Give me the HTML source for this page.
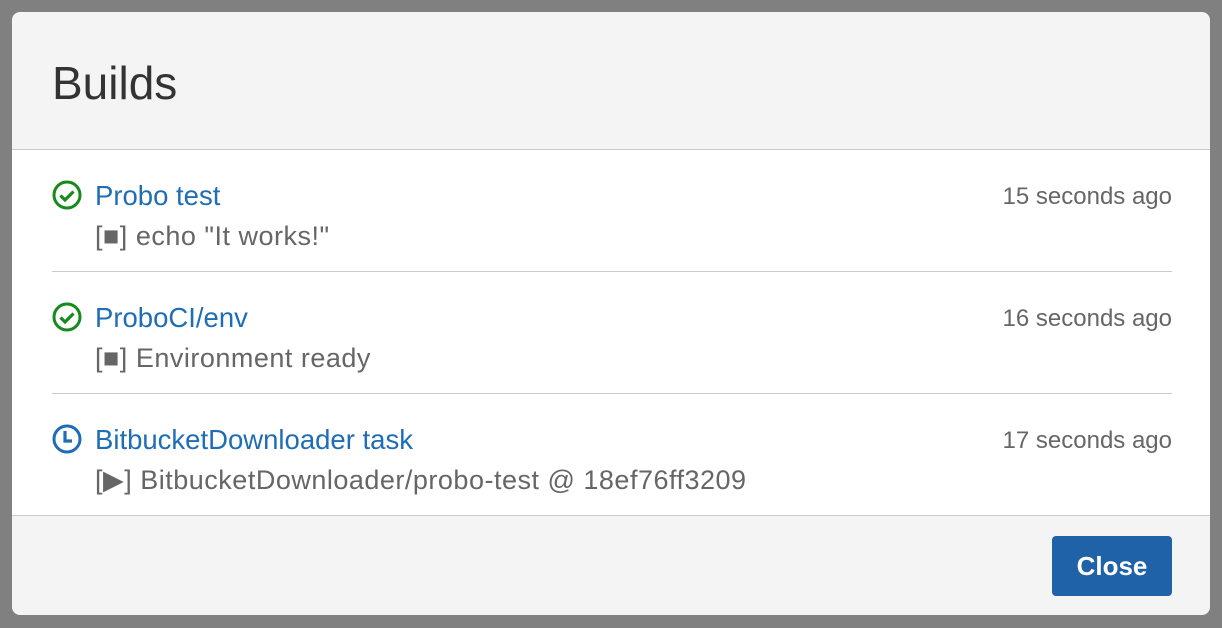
<!DOCTYPE html><html><head><style>
body{margin:0;width:1222px;height:628px;background:#808080;font-family:"Liberation Sans",Arial,Helvetica,sans-serif;position:relative;overflow:hidden}
.d{position:absolute;left:12px;top:12px;width:1198px;height:603px;background:#f4f4f4;border-radius:8px;overflow:hidden}
.h{position:absolute;left:40px;top:44px;font-size:46px;color:#333}
.b{position:absolute;left:0;top:137px;width:1198px;height:365px;background:#fff;border-top:1px solid #ccc;border-bottom:1px solid #ccc}
.r{position:absolute;left:40px;width:1120px;height:121px}
.r.s{border-bottom:1px solid #ccc}
.t{position:absolute;left:43px;top:30px;font-size:27.5px;color:#1f6db5}
.ic{position:absolute;left:0;top:30px}
.tm{position:absolute;right:0;top:33px;font-size:24px;color:#666}
.ds{position:absolute;left:43px;top:71px;font-size:27px;letter-spacing:0.5px;color:#666}
.btn{position:absolute;left:1040px;top:524px;width:120px;height:60px;background:#1f62a8;border-radius:4px;color:#fff;font-weight:bold;font-size:26px;text-align:center;line-height:60px}
</style></head><body><div class="d">
<div class="h">Builds</div>
<div class="b">
<div class="r s" style="top:0">
<svg class="ic" width="30" height="30" viewBox="0 0 30 30"><circle cx="15" cy="15" r="13" fill="none" stroke="#178a1c" stroke-width="3"/><path d="M8.5 15.5l4.5 4.5 8.5-8.5" fill="none" stroke="#178a1c" stroke-width="3.2"/></svg>
<div class="t">Probo test</div><div class="tm">15 seconds ago</div><div class="ds">[■] echo "It works!"</div></div>
<div class="r s" style="top:122px">
<svg class="ic" width="30" height="30" viewBox="0 0 30 30"><circle cx="15" cy="15" r="13" fill="none" stroke="#178a1c" stroke-width="3"/><path d="M8.5 15.5l4.5 4.5 8.5-8.5" fill="none" stroke="#178a1c" stroke-width="3.2"/></svg>
<div class="t">ProboCI/env</div><div class="tm">16 seconds ago</div><div class="ds">[■] Environment ready</div></div>
<div class="r" style="top:244px">
<svg class="ic" width="30" height="30" viewBox="0 0 30 30"><circle cx="15" cy="15" r="13" fill="none" stroke="#1f6db5" stroke-width="3"/><path d="M13 7v10h7" fill="none" stroke="#1f6db5" stroke-width="3.2"/></svg>
<div class="t">BitbucketDownloader task</div><div class="tm">17 seconds ago</div><div class="ds">[▶] BitbucketDownloader/probo-test @ 18ef76ff3209</div></div>
</div>
<div class="btn">Close</div>
</div></body></html>
